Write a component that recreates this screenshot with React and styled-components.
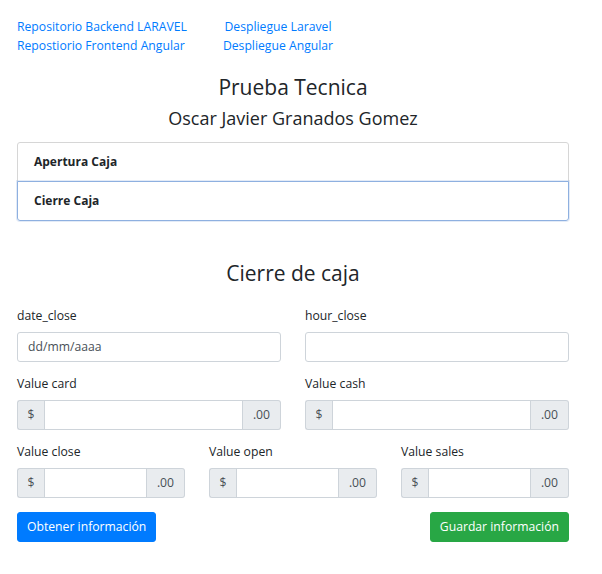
import React from "react";
import styled, { createGlobalStyle } from "styled-components";

const GlobalStyle = createGlobalStyle`
  body {
    margin: 0;
    background: #fff;
    color: #212529;
    font-family: "Open Sans", "Noto Sans", sans-serif;
    font-size: 12.2px;
    line-height: 1.5;
  }
  * { box-sizing: border-box; }
`;

const Page = styled.div`
  padding: 17px 17px 24px 17px;
  width: 586px;
`;

const LinkGrid = styled.div`
  display: grid;
  grid-template-columns: 186px 150px;
`;

const Link = styled.a`
  color: #007bff;
  text-decoration: none;
  line-height: 19px;
  text-align: ${(p) => (p.center ? "center" : "left")};
`;

const Title = styled.h3`
  margin: 20px 0 0;
  text-align: center;
  font-size: 21px;
  font-weight: 500;
  line-height: 1.2;
`;

const SubTitle = styled.h4`
  margin: 8px 0 12px;
  text-align: center;
  font-size: 18px;
  font-weight: 500;
  line-height: 1.2;
`;

const ListGroup = styled.div`
  display: flex;
  flex-direction: column;
`;

const ListItem = styled.div`
  height: 40px;
  padding: 0 16px;
  display: flex;
  align-items: center;
  font-weight: 700;
  font-size: 12px;
  border: 1px solid ${(p) => (p.active ? "#8eb0e0" : "#d6d6d6")};
  margin-top: ${(p) => (p.active ? "-1px" : "0")};
  border-radius: ${(p) => (p.first ? "3px 3px 0 0" : "0 0 3px 3px")};
  box-shadow: ${(p) => (p.active ? "0 0 0 1px rgba(142,176,224,0.25)" : "none")};
  position: relative;
`;

const SectionTitle = styled.h3`
  margin: 40px 0 20px;
  text-align: center;
  font-size: 21px;
  font-weight: 500;
  line-height: 1.2;
`;

const Form = styled.div`
  display: flex;
  flex-direction: column;
  gap: 12px;
`;

const Row = styled.div`
  display: grid;
  grid-template-columns: repeat(${(p) => p.cols}, minmax(0, 1fr));
  column-gap: 24px;
`;

const Field = styled.div`
  display: flex;
  flex-direction: column;
  min-width: 0;
`;

const Label = styled.label`
  line-height: 19px;
  margin-bottom: 7px;
`;

const Input = styled.input`
  height: 30px;
  width: 100%;
  border: 1px solid #ced4da;
  border-radius: 3px;
  padding: 0 10px;
  font-family: inherit;
  font-size: 12.2px;
  color: #495057;
  &::placeholder { color: #495057; }
`;

const InputGroup = styled.div`
  display: flex;
  height: 30px;
`;

const Addon = styled.span`
  display: flex;
  align-items: center;
  justify-content: center;
  width: ${(p) => p.w}px;
  flex: none;
  background: #e9ecef;
  border: 1px solid #ced4da;
  color: #495057;
  font-size: 12.2px;
  border-radius: ${(p) => (p.left ? "3px 0 0 3px" : "0 3px 3px 0")};
  ${(p) => (p.left ? "border-right: 0;" : "border-left: 0;")}
`;

const GroupInput = styled.input`
  flex: 1;
  min-width: 0;
  width: 0;
  border: 1px solid #ced4da;
  border-radius: 0;
  font-family: inherit;
`;

const Actions = styled.div`
  display: flex;
  justify-content: space-between;
  margin-top: 2px;
`;

const Button = styled.button`
  height: 30px;
  padding: 0 9px;
  border: 1px solid ${(p) => p.bg};
  background: ${(p) => p.bg};
  color: #fff;
  border-radius: 3px;
  font-family: inherit;
  font-size: 12.2px;
`;

const MoneyInput = ({ label }) => (
  <Field>
    <Label>{label}</Label>
    <InputGroup>
      <Addon left w={27}>$</Addon>
      <GroupInput />
      <Addon w={38}>.00</Addon>
    </InputGroup>
  </Field>
);

export default function App() {
  return (
    <Page>
      <GlobalStyle />
      <LinkGrid>
        <Link href="#">Repositorio Backend LARAVEL</Link>
        <Link href="#" center>Despliegue Laravel</Link>
        <Link href="#">Repostiorio Frontend Angular</Link>
        <Link href="#" center>Despliegue Angular</Link>
      </LinkGrid>

      <Title>Prueba Tecnica</Title>
      <SubTitle>Oscar Javier Granados Gomez</SubTitle>

      <ListGroup>
        <ListItem first>Apertura Caja</ListItem>
        <ListItem active>Cierre Caja</ListItem>
      </ListGroup>

      <SectionTitle>Cierre de caja</SectionTitle>

      <Form>
        <Row cols={2}>
          <Field>
            <Label>date_close</Label>
            <Input placeholder="dd/mm/aaaa" />
          </Field>
          <Field>
            <Label>hour_close</Label>
            <Input />
          </Field>
        </Row>

        <Row cols={2}>
          <MoneyInput label="Value card" />
          <MoneyInput label="Value cash" />
        </Row>

        <Row cols={3}>
          <MoneyInput label="Value close" />
          <MoneyInput label="Value open" />
          <MoneyInput label="Value sales" />
        </Row>

        <Actions>
          <Button bg="#007bff">Obtener información</Button>
          <Button bg="#28a745">Guardar información</Button>
        </Actions>
      </Form>
    </Page>
  );
}
